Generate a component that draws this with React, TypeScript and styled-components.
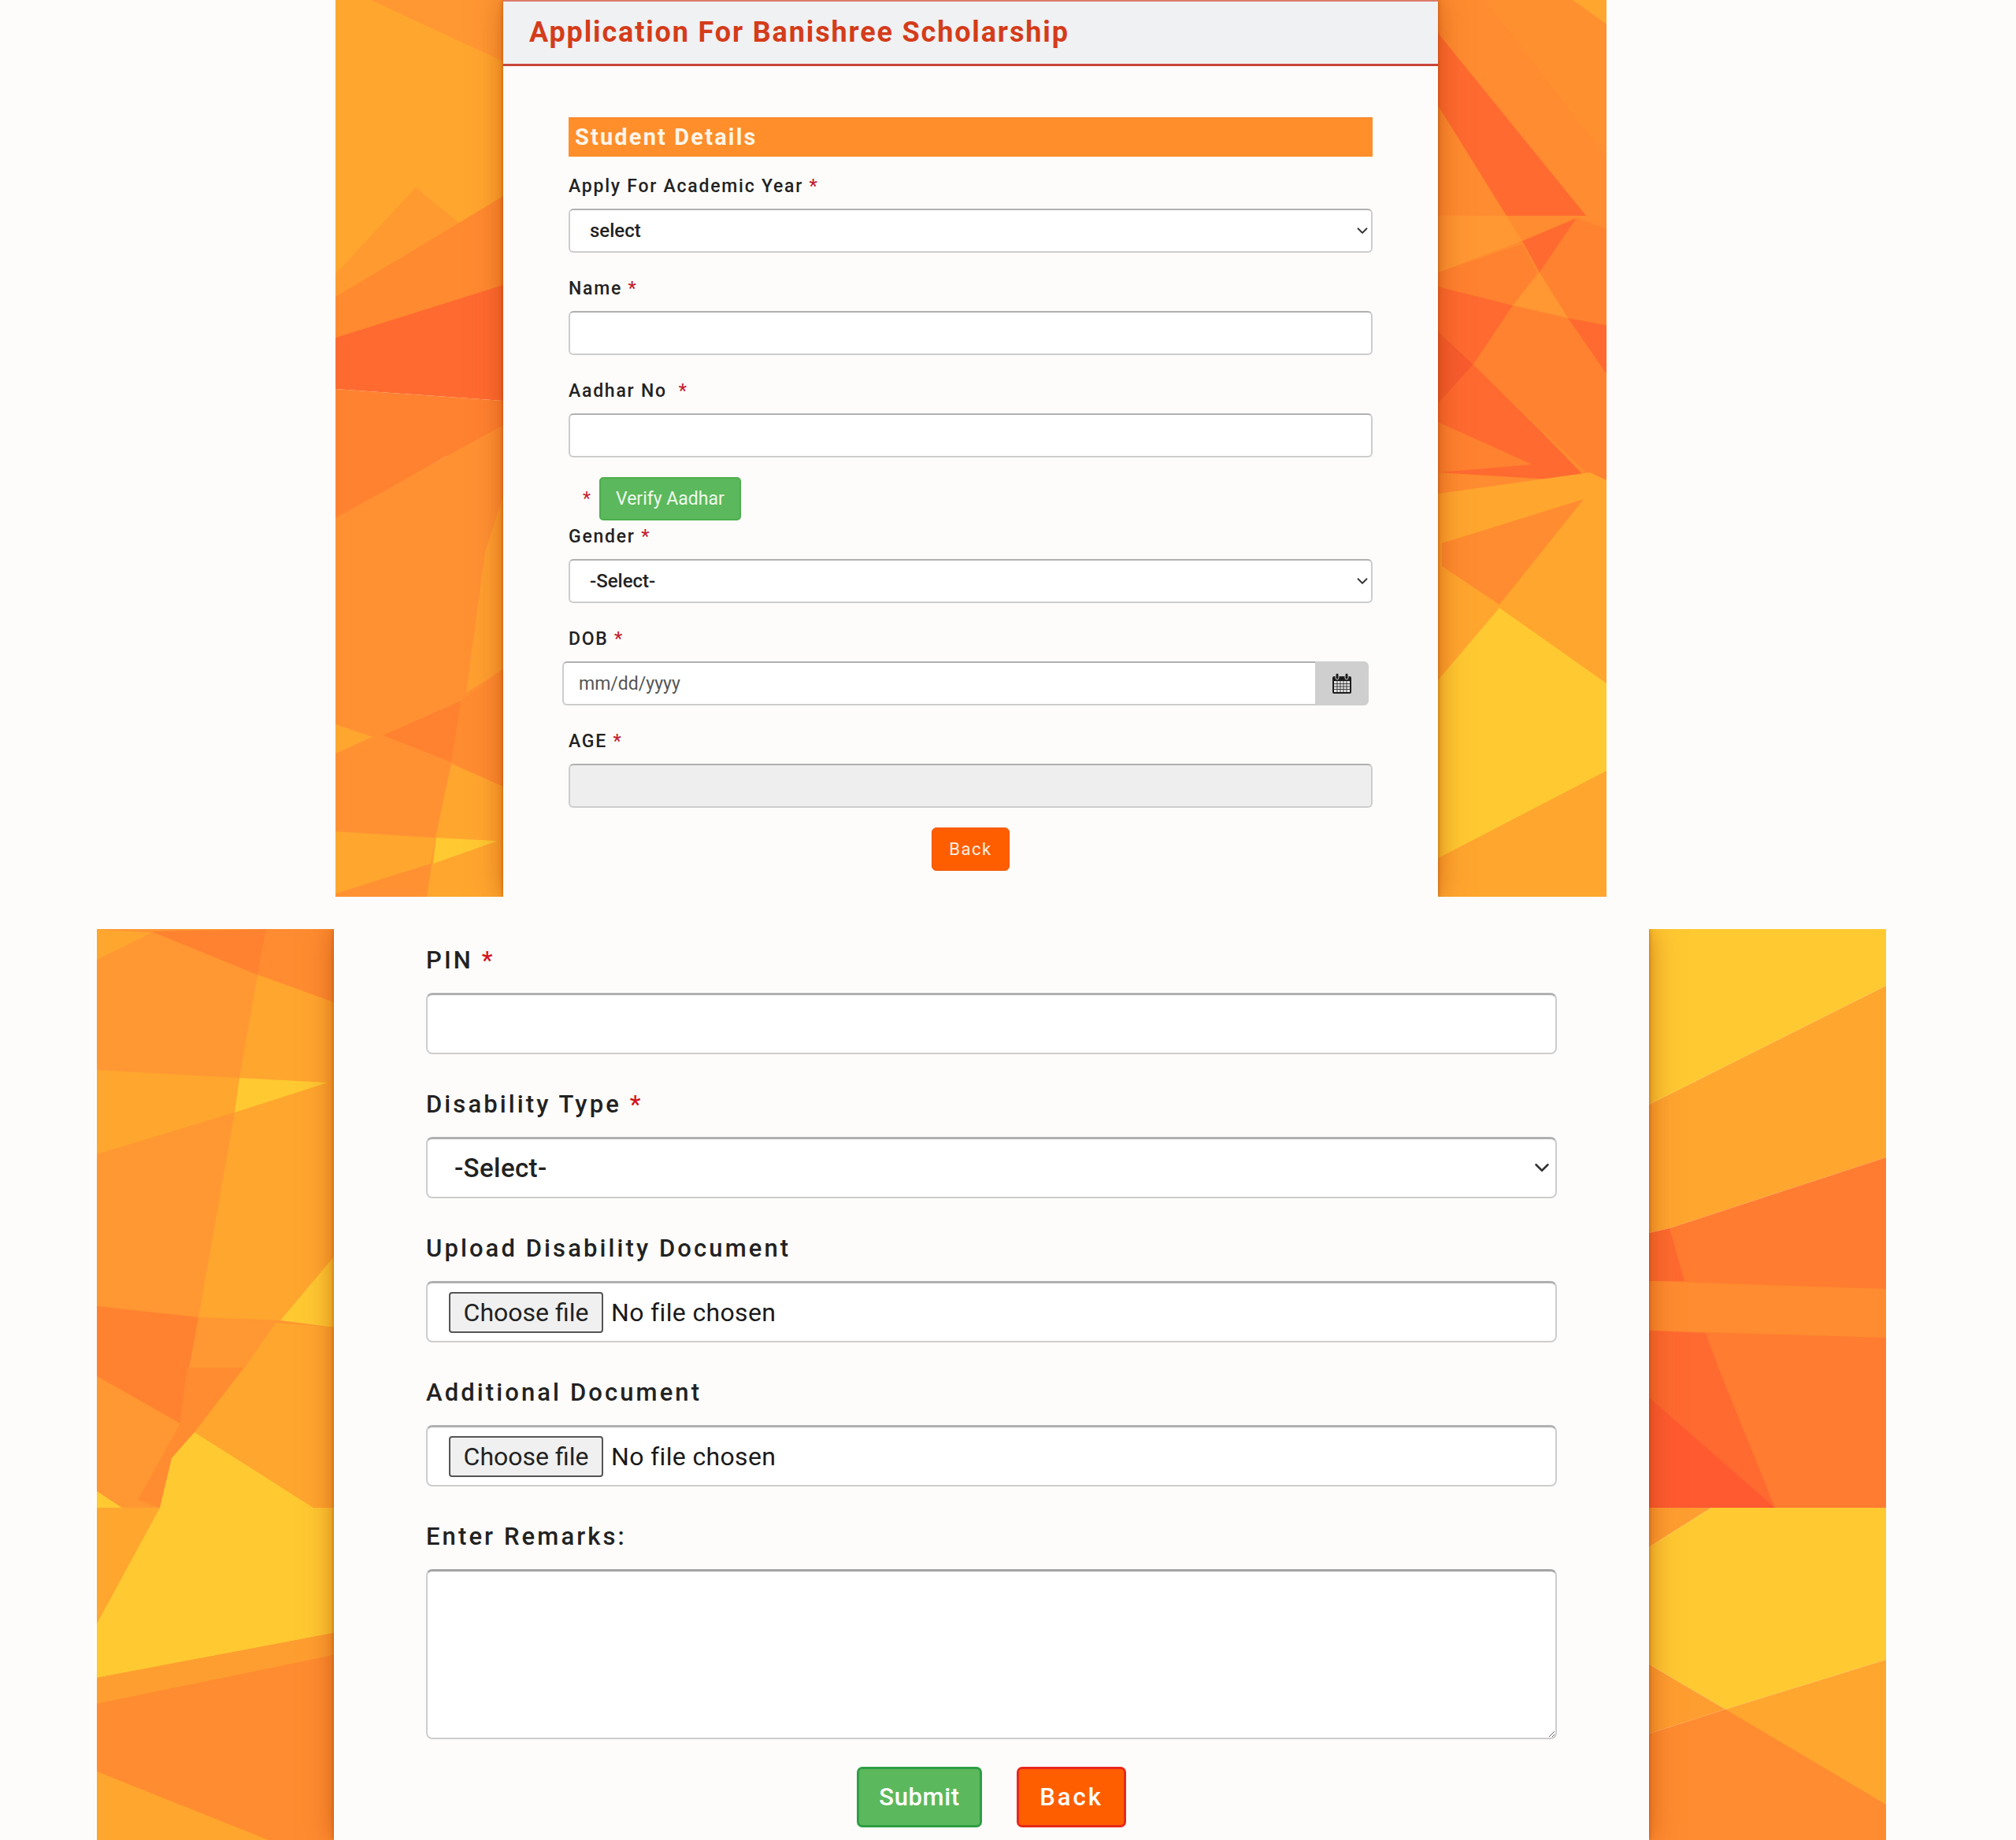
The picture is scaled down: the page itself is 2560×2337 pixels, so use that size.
import React, {FC, ReactNode} from 'react';
import styled, {createGlobalStyle} from 'styled-components';
import {ChevronDown} from 'lucide-react';

type Shape = [string, string];

const LIGHT = '#ffa62f';
const MID = '#ff9733';
const WARM = '#ff8c30';
const DEEP = '#ff8230';
const RED = '#ff6a30';
const YELLOW = '#ffc932';

const topLeftShapes: Shape[] = [
  [LIGHT, '0,0 213,0 213,400 0,400'],
  [MID, '45,0 213,0 213,78'],
  ['#ff9a30', '102,238 0,348 0,400 213,400 213,321 157,283'],
  ['#ff8a30', '0,377 157,283 213,249 213,420 0,440'],
  [RED, '0,429 213,362 213,509 0,494'],
  ['#ff7a30', '12,505 213,517 213,540'],
  [DEEP, '0,494 213,509 213,560 140,580 0,660'],
  ['#ff9133', '0,658 140,580 213,540 213,1139 0,1139'],
  ['#ffa030', '213,630 213,850 166,880 190,700'],
  [DEEP, '60,934 147,968 160,890'],
  ['#ff8c30', '160,890 213,850 213,1000 147,968'],
  [LIGHT, '0,920 47,936 0,957'],
  [LIGHT, '147,970 213,999 213,1139 116,1139 127,1064'],
  [LIGHT, '0,1056 127,1064 121,1097 0,1135'],
  [YELLOW, '128,1064 206,1068 124,1097'],
];

const topRightShapes: Shape[] = [
  [WARM, '0,0 214,0 214,274 0,274'],
  [LIGHT, '171,0 214,0 214,31'],
  ['#ff9030', '60,0 171,0 214,31 214,200'],
  [RED, '0,42 188,274 87,274 0,134'],
  [WARM, '0,274 214,274 214,640 0,640'],
  [MID, '0,274 87,274 107,306 0,346'],
  [RED, '107,306 176,277 129,346'],
  [DEEP, '0,346 107,310 126,346 95,388 0,364'],
  [DEEP, '129,346 176,277 214,291 214,413 165,404'],
  [MID, '129,346 165,404 95,388'],
  [RED, '0,364 95,388 45,463 0,421'],
  [DEEP, '45,463 95,388 165,404 214,475 214,620 188,600'],
  [RED, '165,404 214,413 214,475'],
  ['#f85c2e', '0,421 45,463 0,513'],
  [RED, '0,513 45,463 126,543 193,612 0,600'],
  [DEEP, '0,536 120,590 0,600'],
  [LIGHT, '0,627 193,600 214,610 214,1139 0,1139'],
  [WARM, '185,634 5,690 5,719 78,768'],
  [YELLOW, '78,772 214,868 214,979 0,1090 0,864'],
];

const bottomLeftShapes: Shape[] = [
  [MID, '0,0 301,0 301,1157 0,1157'],
  [LIGHT, '0,0 69,5 0,39'],
  [DEEP, '69,3 215,0 204,58'],
  [WARM, '215,0 301,0 301,93 204,58'],
  [LIGHT, '204,58 301,93 301,416 233,497 129,493 175,233 181,189'],
  [LIGHT, '0,179 181,189 175,233 0,286'],
  [YELLOW, '181,189 293,195 175,233'],
  [YELLOW, '301,416 301,506 233,497'],
  [DEEP, '0,479 129,493 115,568 0,568'],
  [MID, '129,493 227,500 172,580 115,580'],
  [LIGHT, '227,500 301,506 301,580 172,580'],
  [DEEP, '0,568 115,557 106,628'],
  [MID, '0,568 106,628 52,725 0,735'],
  [YELLOW, '0,714 32,735 0,735'],
  [WARM, '115,557 187,557 124,639 106,628'],
  [LIGHT, '187,557 301,557 301,735 275,735 124,639'],
  [LIGHT, '0,735 80,735 0,882'],
  [WARM, '106,628 124,639 95,672 80,735 52,725'],
  [YELLOW, '124,639 275,735 301,735 301,894 0,951 0,882 80,735 95,672'],
  ['#ff9e30', '0,951 301,894 301,922 0,984'],
  [WARM, '0,984 301,922 301,1157 0,1157'],
  [LIGHT, '0,1070 218,1157 0,1157'],
];

const bottomRightShapes: Shape[] = [
  [YELLOW, '0,0 301,0 301,72 0,223'],
  [LIGHT, '0,223 301,72 301,290 26,380 0,386'],
  ['#ff7c30', '26,380 301,290 301,735 0,735 0,447'],
  [RED, '0,386 26,380 45,447 0,447'],
  [WARM, '0,447 301,457 301,519 0,510'],
  [RED, '0,510 72,513 88,557 160,735 0,735'],
  ['#ff5a30', '0,595 160,735 0,735'],
  ['#ff9e30', '0,735 79,735 0,785'],
  [YELLOW, '79,735 301,735 301,928 97,991 0,934 0,785'],
  [LIGHT, '97,991 301,928 301,1157 0,1157'],
  ['#ff9e30', '0,934 97,991 0,1022'],
  [WARM, '0,1022 97,991 301,1112 301,1157 0,1157'],
];

const GlobalStyle = createGlobalStyle`
  * {
    box-sizing: border-box;
  }
  body {
    margin: 0;
    background: #fdfcfa;
    font-family: Roboto, "Liberation Sans", sans-serif;
    color: #222;
  }
`;

const Backdrop: FC<{shapes: Shape[]; width: number; height: number}> = ({
  shapes,
  width,
  height,
}) => (
  <Side>
    <svg
      width="100%"
      height="100%"
      viewBox={`0 0 ${width} ${height}`}
      preserveAspectRatio="none">
      {shapes.map(([fill, points]) => (
        <polygon key={points} fill={fill} points={points} />
      ))}
    </svg>
  </Side>
);

const Select: FC<{value: string; big?: boolean}> = ({value, big}) => (
  <SelectWrap>
    <SelectBox $big={big} defaultValue={value}>
      <option>{value}</option>
    </SelectBox>
    <Chevron $big={big}>
      <ChevronDown size={big ? 30 : 22} strokeWidth={2} />
    </Chevron>
  </SelectWrap>
);

const CalendarIcon: FC = () => (
  <svg width="26" height="28" viewBox="0 0 26 28">
    <rect x="1" y="5" width="24" height="22" rx="2" fill="#1d1d1d" />
    <rect x="3" y="11" width="20" height="14" fill="#e4e4e4" />
    <path
      d="M3 14.5h20M3 18h20M3 21.5h20M7 11v14M11 11v14M15 11v14M19 11v14"
      stroke="#1d1d1d"
      strokeWidth="0.8"
    />
    <rect x="5" y="1" width="4" height="8" rx="2" fill="#1d1d1d" stroke="#ccc" />
    <rect x="17" y="1" width="4" height="8" rx="2" fill="#1d1d1d" stroke="#ccc" />
  </svg>
);

const TopField: FC<{label: ReactNode; children: ReactNode}> = ({
  label,
  children,
}) => (
  <Field>
    <Label>{label}</Label>
    {children}
  </Field>
);

const BottomField: FC<{label: ReactNode; children: ReactNode}> = ({
  label,
  children,
}) => (
  <BigField>
    <BigLabel>{label}</BigLabel>
    {children}
  </BigField>
);

const FilePicker: FC = () => (
  <FileBox>
    <FileButton type="button">Choose file</FileButton>
    <FileName>No file chosen</FileName>
  </FileBox>
);

const App: FC = () => (
  <>
    <GlobalStyle />
    <Page>
      <Section $left={426} $columns="213px 1187px 214px">
        <Backdrop shapes={topLeftShapes} width={213} height={1139} />
        <Panel>
          <Header>
            <Title>Application For Banishree Scholarship</Title>
          </Header>
          <TopForm>
            <SectionBar>Student Details</SectionBar>
            <TopField
              label={
                <>
                  Apply For Academic Year <Star>*</Star>
                </>
              }>
              <Select value="select" />
            </TopField>
            <TopField
              label={
                <>
                  Name <Star>*</Star>
                </>
              }>
              <TextInput />
            </TopField>
            <TopField
              label={
                <>
                  Aadhar No &nbsp;<Star>*</Star>
                </>
              }>
              <TextInput />
            </TopField>
            <VerifyRow>
              <Star>*</Star>
              <VerifyButton type="button">Verify Aadhar</VerifyButton>
            </VerifyRow>
            <TopField
              label={
                <>
                  Gender <Star>*</Star>
                </>
              }>
              <Select value="-Select-" />
            </TopField>
            <TopField
              label={
                <>
                  DOB <Star>*</Star>
                </>
              }>
              <DateGroup>
                <DateInput placeholder="mm/dd/yyyy" />
                <DateAddon>
                  <CalendarIcon />
                </DateAddon>
              </DateGroup>
            </TopField>
            <TopField
              label={
                <>
                  AGE <Star>*</Star>
                </>
              }>
              <TextInput disabled />
            </TopField>
            <CenterRow>
              <SmallBack type="button">Back</SmallBack>
            </CenterRow>
          </TopForm>
        </Panel>
        <Backdrop shapes={topRightShapes} width={214} height={1139} />
      </Section>

      <Section $left={123} $columns="301px 1670px 301px" $top={41}>
        <Backdrop shapes={bottomLeftShapes} width={301} height={1157} />
        <Panel>
          <BottomForm>
            <BottomField
              label={
                <>
                  PIN <BigStar>*</BigStar>
                </>
              }>
              <BigInput />
            </BottomField>
            <BottomField
              label={
                <>
                  Disability Type <BigStar>*</BigStar>
                </>
              }>
              <Select value="-Select-" big />
            </BottomField>
            <BottomField label="Upload Disability Document">
              <FilePicker />
            </BottomField>
            <BottomField label="Additional Document">
              <FilePicker />
            </BottomField>
            <BottomField label="Enter Remarks:">
              <Remarks />
            </BottomField>
            <ActionRow>
              <BigButton
                type="button"
                $color="#5cb85c"
                $edge="#2f9e44"
                $width={159}
                $spacing={0.6}>
                Submit
              </BigButton>
              <BigButton
                type="button"
                $color="#ff5e00"
                $edge="#e8281c"
                $width={139}
                $spacing={3}>
                Back
              </BigButton>
            </ActionRow>
          </BottomForm>
        </Panel>
        <Backdrop shapes={bottomRightShapes} width={301} height={1157} />
      </Section>
    </Page>
  </>
);

export default App;

const Page = styled.div`
  display: flex;
  flex-direction: column;
  width: 2560px;
`;

const Section = styled.section<{$left: number; $columns: string; $top?: number}>`
  display: grid;
  grid-template-columns: ${props => props.$columns};
  width: max-content;
  margin-left: ${props => props.$left}px;
  margin-top: ${props => props.$top ?? 0}px;
  overflow: hidden;
`;

const Side = styled.div`
  min-height: 0;
  height: 100%;
  overflow: hidden;

  svg {
    display: block;
  }
`;

const Panel = styled.div`
  position: relative;
  z-index: 1;
  background: #fdfcfa;
  box-shadow:
    0 0 34px rgba(170, 60, 0, 0.55),
    0 0 5px rgba(150, 50, 0, 0.55);
`;

const Header = styled.header`
  height: 84px;
  padding: 0 33px 2px;
  display: flex;
  align-items: center;
  background: #f0f1f2;
  border-top: 2px solid #dc7a6a;
  border-bottom: 3px solid #c9473a;
`;

const Title = styled.h1`
  margin: 0;
  font-size: 36px;
  font-weight: 700;
  letter-spacing: 1.85px;
  color: #d43c1a;
`;

const TopForm = styled.div`
  padding: 65px 83px 32px;
`;

const SectionBar = styled.div`
  height: 50px;
  margin-bottom: 22px;
  padding: 0 0 2px 8px;
  display: flex;
  align-items: center;
  background: #ff8e2b;
  border-top: 1px solid #f47d20;
  font-size: 29px;
  font-weight: 700;
  letter-spacing: 2.15px;
  color: #fff5e8;
`;

const Field = styled.div`
  margin-bottom: 30px;
`;

const Label = styled.label`
  display: block;
  height: 30px;
  margin-bottom: 14px;
  font-size: 23px;
  line-height: 32px;
  font-weight: 500;
  letter-spacing: 1.75px;
  color: #222;
`;

const Star = styled.span`
  color: #c4202f;
`;

const BigStar = styled.span`
  color: #d3141f;
`;

const TextInput = styled.input`
  display: block;
  width: 100%;
  height: 56px;
  background: ${props => (props.disabled ? '#eeeeee' : '#ffffff')};
  border: 2px solid #cdcdcd;
  border-top-color: #b0b0b0;
  border-radius: 6px;
`;

const SelectWrap = styled.div`
  position: relative;
`;

const SelectBox = styled.select<{$big?: boolean}>`
  display: block;
  width: 100%;
  height: ${props => (props.$big ? '78px' : '56px')};
  padding-left: ${props => (props.$big ? '34px' : '25px')};
  appearance: none;
  background: #fff;
  border: 2px solid #cdcdcd;
  border-top: ${props => (props.$big ? '3px' : '2px')} solid #b0b0b0;
  border-radius: ${props => (props.$big ? '8px' : '6px')};
  font-family: Roboto, sans-serif;
  font-size: ${props => (props.$big ? '33px' : '24px')};
  font-weight: 500;
  letter-spacing: ${props => (props.$big ? '0.4px' : '0')};
  color: #222;
`;

const Chevron = styled.span<{$big?: boolean}>`
  position: absolute;
  top: 50%;
  right: ${props => (props.$big ? '4px' : '2px')};
  transform: translateY(-50%);
  display: flex;
  color: #333;
  pointer-events: none;
`;

const VerifyRow = styled.div`
  display: flex;
  align-items: center;
  gap: 11px;
  height: 55px;
  margin: -5px 0 5px 18px;
  font-size: 23px;
`;

const VerifyButton = styled.button`
  width: 180px;
  height: 55px;
  background: #5cb85c;
  border: 2px solid #4cae4c;
  border-radius: 5px;
  font-family: Roboto, sans-serif;
  font-size: 23px;
  color: #eefaee;
`;

const DateGroup = styled.div`
  display: flex;
  height: 56px;
  margin: 0 5px 0 -8px;
`;

const DateInput = styled.input`
  flex: 1;
  padding-left: 19px;
  background: #fff;
  border: 2px solid #cdcdcd;
  border-top-color: #b0b0b0;
  border-right: none;
  border-radius: 6px 0 0 6px;
  font-family: Roboto, sans-serif;
  font-size: 23px;

  &::placeholder {
    color: #555;
    opacity: 1;
  }
`;

const DateAddon = styled.div`
  width: 68px;
  display: flex;
  align-items: center;
  justify-content: center;
  background: #cfcfcf;
  border-radius: 0 6px 6px 0;
`;

const CenterRow = styled.div`
  display: flex;
  justify-content: center;
  margin-top: -5px;
  margin-bottom: 1px;
`;

const SmallBack = styled.button`
  width: 99px;
  height: 55px;
  background: #ff5e00;
  border: 1px solid #ee5500;
  border-radius: 6px;
  font-family: Roboto, sans-serif;
  font-size: 22px;
  letter-spacing: 1.6px;
  color: #ffeee4;
`;

const BottomForm = styled.div`
  padding: 19px 117px 14px;
`;

const BigField = styled.div`
  margin-bottom: 43px;
`;

const BigLabel = styled.label`
  display: block;
  height: 40px;
  margin-bottom: 22px;
  font-size: 31px;
  line-height: 42px;
  font-weight: 500;
  letter-spacing: 3.1px;
  color: #222;
`;

const BigInput = styled.input`
  display: block;
  width: 100%;
  height: 78px;
  background: #fff;
  border: 2px solid #cdcdcd;
  border-top: 3px solid #b0b0b0;
  border-radius: 8px;
`;

const FileBox = styled.div`
  display: flex;
  align-items: center;
  height: 78px;
  padding-left: 27px;
  gap: 10px;
  background: #fff;
  border: 2px solid #cdcdcd;
  border-top: 3px solid #b0b0b0;
  border-radius: 8px;
`;

const FileButton = styled.button`
  width: 196px;
  height: 52px;
  padding: 0;
  background: #f0f0f0;
  border: 2px solid #555;
  border-radius: 4px;
  font-family: Roboto, sans-serif;
  font-size: 32px;
  color: #222;
`;

const FileName = styled.span`
  font-size: 32px;
  letter-spacing: 0.35px;
  color: #1a1a1a;
`;

const Remarks = styled.textarea`
  display: block;
  width: 100%;
  height: 216px;
  background: #fff;
  border: 2px solid #cdcdcd;
  border-top: 3px solid #a4a4a4;
  border-radius: 8px;
`;

const ActionRow = styled.div`
  display: flex;
  justify-content: center;
  gap: 44px;
  margin-top: -8px;
`;

const BigButton = styled.button<{$color: string; $edge: string; $width: number; $spacing: number}>`
  width: ${props => props.$width}px;
  height: 77px;
  padding: 0;
  background: ${props => props.$color};
  border: 3px solid ${props => props.$edge};
  border-radius: 7px;
  font-family: Roboto, sans-serif;
  font-size: 31px;
  font-weight: 500;
  letter-spacing: ${props => props.$spacing}px;
  color: #fff;
`;
